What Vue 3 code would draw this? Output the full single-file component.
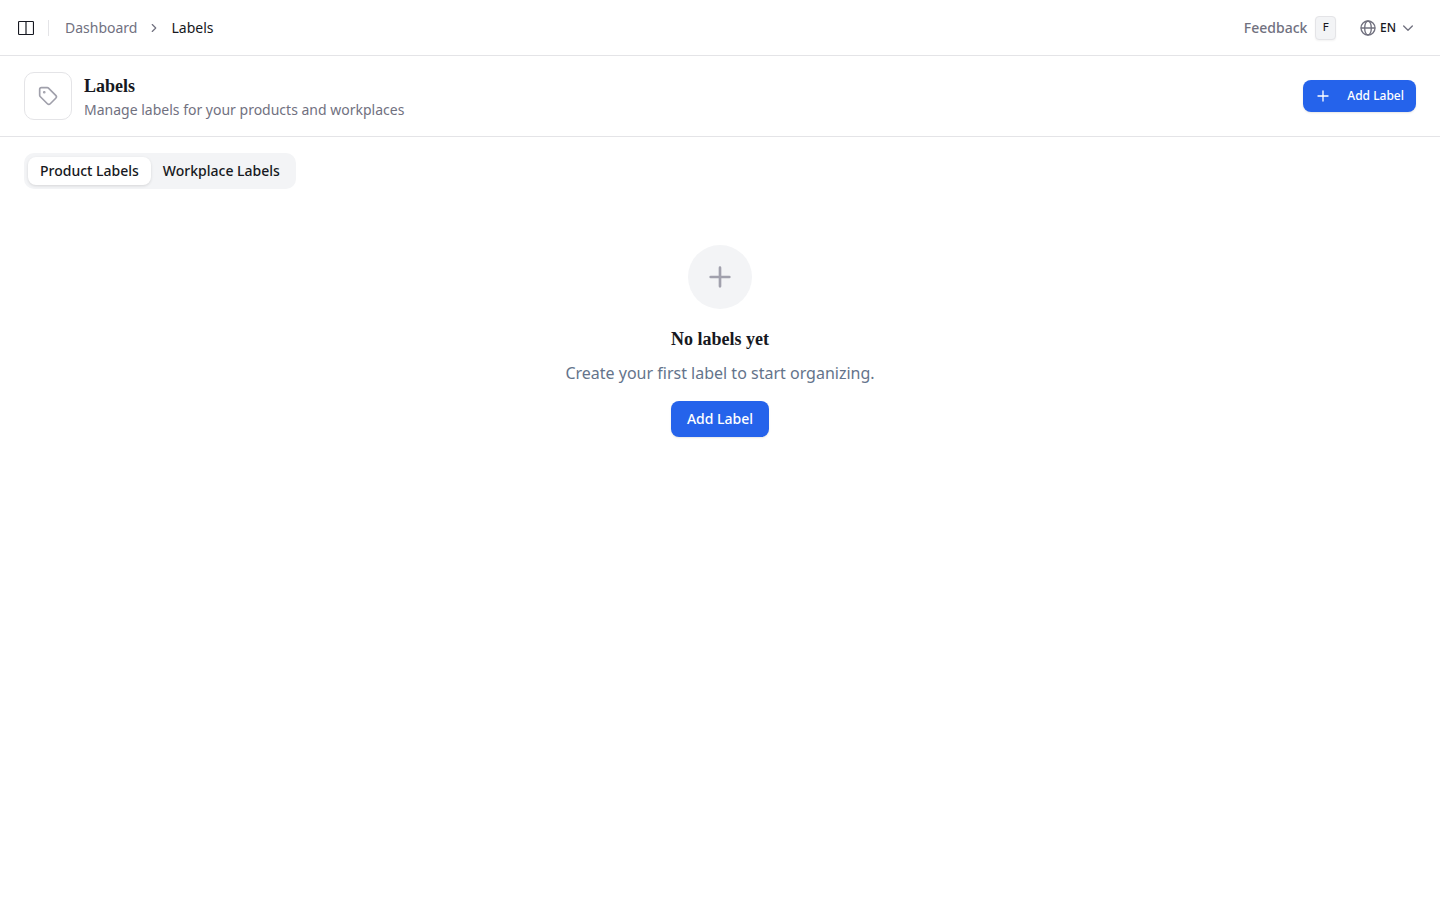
<script setup>
import { ref } from 'vue'

const tabs = ['Product Labels', 'Workplace Labels']
const active = ref(tabs[0])
</script>

<template>
  <div class="page">
    <header class="topbar">
      <button class="icon-button" type="button" aria-label="Toggle sidebar">
        <svg width="16" height="16" viewBox="0 0 16 16" fill="none" stroke="currentColor">
          <rect x="0.5" y="1.5" width="15" height="13" rx="0.8" stroke-width="1.2" />
          <path d="M8 2v12" stroke-width="1.2" />
        </svg>
      </button>
      <span class="divider"></span>
      <nav class="crumbs" aria-label="Breadcrumb">
        <a href="#">Dashboard</a>
        <svg class="line-icon" width="14" height="14" viewBox="0 0 24 24"><path d="m9 18 6-6-6-6" /></svg>
        <span class="current" aria-current="page">Labels</span>
      </nav>
      <div class="actions">
        <button class="feedback" type="button">Feedback <kbd>F</kbd></button>
        <button class="language" type="button">
          <svg class="line-icon" width="16" height="16" viewBox="0 0 24 24">
            <circle cx="12" cy="12" r="10.5" />
            <ellipse cx="12" cy="12" rx="5" ry="10.5" />
            <path d="M2 12h20" />
          </svg>
          <span>EN</span>
          <svg class="line-icon" width="16" height="16" viewBox="0 0 24 24"><path d="m5.5 9 6.5 6.5L18.5 9" /></svg>
        </button>
      </div>
    </header>

    <section class="heading">
      <div class="tile">
        <svg class="line-icon" width="20" height="20" viewBox="0 0 24 24">
          <path d="M12.586 2.586A2 2 0 0 0 11.172 2H4a2 2 0 0 0-2 2v7.172a2 2 0 0 0 .586 1.414l8.704 8.704a2.426 2.426 0 0 0 3.42 0l6.58-6.58a2.426 2.426 0 0 0 0-3.42z" />
          <circle cx="7.5" cy="7.5" r="0.6" fill="currentColor" />
        </svg>
      </div>
      <div class="titles">
        <h1>Labels</h1>
        <p>Manage labels for your products and workplaces</p>
      </div>
      <button class="primary small" type="button">
        <svg class="line-icon" width="16" height="16" viewBox="0 0 24 24"><path d="M4.5 12h15M12 4.5v15" /></svg>
        Add Label
      </button>
    </section>

    <main>
      <div class="tabs" role="tablist">
        <button
          v-for="tab in tabs"
          :key="tab"
          type="button"
          role="tab"
          :aria-selected="active === tab"
          :class="{ selected: active === tab }"
          @click="active = tab"
        >{{ tab }}</button>
      </div>

      <div class="empty">
        <div class="circle">
          <svg class="line-icon" width="32" height="32" viewBox="0 0 24 24"><path d="M5 12h14M12 5v14" /></svg>
        </div>
        <h2>No labels yet</h2>
        <p>Create your first label to start organizing.</p>
        <button class="primary" type="button">Add Label</button>
      </div>
    </main>
  </div>
</template>

<style>
body {
  margin: 0;
  background: #fff;
}
</style>

<style scoped>
.page {
  font: 14px/20px "Noto Sans", sans-serif;
  color: #161821;
}
button {
  font: inherit;
  color: inherit;
  border: 0;
  background: none;
  padding: 0;
  cursor: pointer;
}
svg {
  display: block;
  flex: none;
}
h1, h2, p {
  margin: 0;
}
.line-icon {
  fill: none;
  stroke: currentColor;
  stroke-width: 2;
  stroke-linecap: round;
  stroke-linejoin: round;
}
.topbar {
  display: flex;
  align-items: center;
  height: 55px;
  padding: 0 24px 0 12px;
  border-bottom: 1px solid #e4e4e7;
}
.icon-button {
  display: grid;
  place-items: center;
  width: 28px;
  height: 28px;
}
.divider {
  width: 1px;
  height: 16px;
  margin: 0 16px 0 8px;
  background: #e4e4e7;
}
.crumbs {
  display: flex;
  align-items: center;
  gap: 10px;
  color: #71717f;
}
.crumbs a {
  color: inherit;
  text-decoration: none;
}
.crumbs .current {
  color: #161821;
}
.actions {
  display: flex;
  align-items: center;
  gap: 24px;
  margin-left: auto;
}
.feedback {
  display: flex;
  align-items: center;
  gap: 8px;
  font-weight: 500;
  color: #71717f;
}
kbd {
  padding: 3px 6px;
  border: 1px solid #e4e4e7;
  border-radius: 4px;
  background: #f3f4f6;
  color: #161821;
  font: 11px/16px "DejaVu Sans Mono", monospace;
  box-shadow: 0 1px 2px rgba(0, 0, 0, 0.05);
}
.language {
  display: flex;
  align-items: center;
  gap: 4px;
  font-size: 12px;
  font-weight: 500;
}
.language svg {
  color: #71717f;
}
.heading {
  display: flex;
  align-items: center;
  gap: 12px;
  padding: 16px 24px;
  border-bottom: 1px solid #e4e4e7;
}
.tile {
  box-sizing: border-box;
  display: grid;
  place-items: center;
  width: 48px;
  height: 48px;
  border: 1px solid #e4e4e7;
  border-radius: 10px;
  color: #a0a0ab;
}
.titles {
  flex: 1;
}
h1, h2 {
  font-family: "Liberation Serif", serif;
  font-weight: 600;
}
h1 {
  font-size: 18px;
  line-height: 28px;
}
.titles p {
  color: #71717f;
}
.primary {
  display: flex;
  align-items: center;
  height: 36px;
  padding: 0 16px;
  border-radius: 8px;
  background: #2563eb;
  color: #fff;
  font-weight: 500;
  box-shadow: 0 1px 2px rgba(0, 0, 0, 0.1);
}
.primary.small {
  gap: 16px;
  height: 32px;
  padding: 0 12px;
  font-size: 12px;
}
main {
  padding: 16px 24px;
}
.tabs {
  display: inline-flex;
  padding: 4px;
  border-radius: 10px;
  background: #f3f4f6;
}
.tabs button {
  height: 28px;
  padding: 0 12px;
  border-radius: 8px;
  font-weight: 500;
}
.tabs .selected {
  background: #fff;
  box-shadow: 0 1px 3px rgba(0, 0, 0, 0.12);
}
.empty {
  display: flex;
  flex-direction: column;
  align-items: center;
  padding: 56px 0;
  text-align: center;
}
.circle {
  display: grid;
  place-items: center;
  width: 64px;
  height: 64px;
  border-radius: 50%;
  background: #f3f4f6;
  color: #a1a1ad;
}
h2 {
  margin-top: 16px;
  font-size: 18px;
  line-height: 28px;
}
.empty p {
  margin: 8px 0 16px;
  font-size: 16px;
  line-height: 24px;
  color: #64748b;
}
</style>
